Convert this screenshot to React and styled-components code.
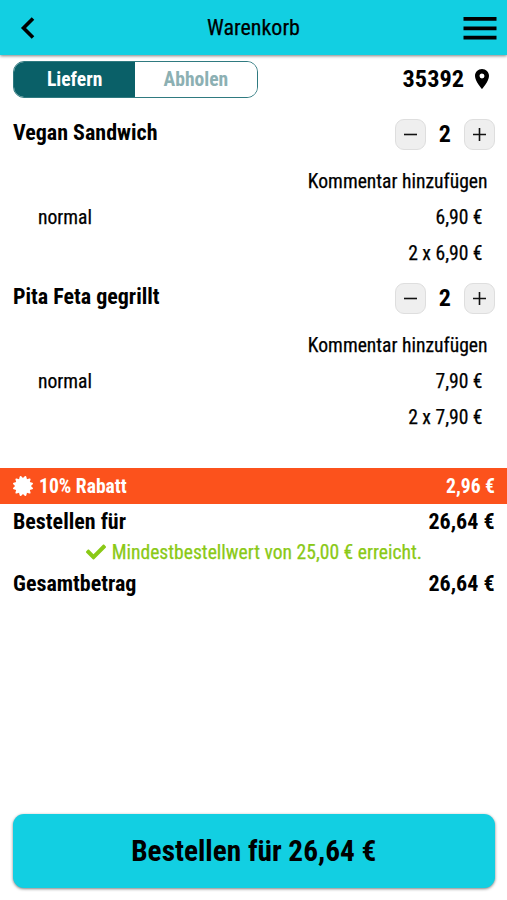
import styled, { createGlobalStyle } from 'styled-components';
import { useState } from 'react';
import { FaCheck, FaCertificate } from 'react-icons/fa';
import { MdLocationOn } from 'react-icons/md';

const GlobalStyle = createGlobalStyle`
  * {
    box-sizing: border-box;
  }
  body {
    margin: 0;
    background: #fff;
    color: #000;
    font-family: 'Roboto Condensed', Roboto, sans-serif;
    font-stretch: 75%;
    overflow: hidden;
  }
  button {
    font: inherit;
    font-stretch: inherit;
    color: inherit;
    padding: 0;
    cursor: pointer;
  }
`;

const Page = styled.div`
  display: flex;
  flex-direction: column;
  width: 507px;
  height: 900px;
`;

const Header = styled.header`
  display: grid;
  grid-template-columns: 80px 1fr 80px;
  align-items: center;
  height: 55px;
  flex: none;
  background: #12cfe2;
  box-shadow: 0 1px 3px rgba(0, 0, 0, 0.5);
`;

const HeaderButton = styled.button`
  display: flex;
  justify-content: ${props => props.$right ? 'flex-end' : 'flex-start'};
  padding: ${props => props.$right ? '1px 10px 0 0' : '1px 0 0 20px'};
  border: none;
  background: none;
`;

const Text = styled.span`
  display: inline-block;
  white-space: nowrap;
  font-size: ${props => props.$size || 19.6}px;
  font-weight: ${props => props.$bold ? 700 : 400};
  -webkit-text-stroke: ${props => props.$bold ? 0 : 0.25}px currentColor;
  line-height: 24px;
`;

const Title = styled.h1`
  margin: 0;
  padding-top: 1px;
  font-size: 0;
  text-align: center;
`;

const Options = styled.div`
  display: flex;
  justify-content: space-between;
  align-items: center;
  height: 37px;
  margin: 6px 13px 0;
  flex: none;
`;

const Toggle = styled.div`
  display: flex;
  width: 244.5px;
  height: 37px;
  border: 1px solid #2f7a80;
  border-radius: 11px;
  overflow: hidden;
`;

const ToggleItem = styled.button`
  flex: 1;
  border: none;
  background: ${props => props.$active ? '#0a6068' : '#fff'};
  color: ${props => props.$active ? '#fff' : '#8cb0b3'};
`;

const Place = styled.div`
  display: flex;
  align-items: center;
  gap: 6px;
  padding-bottom: 2px;
`;

const Items = styled.main`
  display: flex;
  flex-direction: column;
  height: 369.5px;
  padding: 21px 12.5px 0 13px;
  flex: none;
`;

const Item = styled.section`
  height: 163.5px;
`;

const Row = styled.div`
  display: flex;
  justify-content: space-between;
  align-items: center;
  height: ${props => props.$height || 36}px;
  padding: ${props => props.$inset || '0'};
`;

const RowRight = styled(Row)`
  justify-content: flex-end;
`;

const Name = styled(Text)`
  margin-top: -3px;
`;

const Count = styled(Text)`
  margin-top: -1px;
`;

const Stepper = styled.div`
  display: flex;
  align-items: center;
  gap: 12.7px;
`;

const StepButton = styled.button`
  display: flex;
  align-items: center;
  justify-content: center;
  width: 31px;
  height: 31px;
  border: 1px solid #dedede;
  border-radius: 9px;
  background: #efefef;
`;

const Discount = styled.div`
  display: flex;
  align-items: center;
  justify-content: space-between;
  height: 36.5px;
  padding: 2px 12px 0 13px;
  flex: none;
  background: #fc521c;
  color: #fff;

  svg {
    margin-top: -2px;
  }
`;

const IconLine = styled.div`
  display: flex;
  align-items: center;
  gap: ${props => props.$gap || 6}px;
`;

const Summary = styled.div`
  padding: 0.5px 12.5px 0 13px;
`;

const Reached = styled(IconLine)`
  height: 28px;
  justify-content: center;
  color: #8ac916;

  svg {
    margin-top: -1px;
  }
`;

const OrderButton = styled.button`
  height: 74px;
  margin: auto 12.5px 12px 13px;
  padding-top: 1px;
  flex: none;
  border: none;
  border-radius: 11px;
  background: #12cfe2;
  box-shadow: 0 1px 3px rgba(0, 0, 0, 0.5);
`;

const products = [
  { name: 'Vegan Sandwich', price: '6,90 €' },
  { name: 'Pita Feta gegrillt', price: '7,90 €' },
];

function Sign({ plus }) {
  return (
    <svg width="15" height="15" viewBox="0 0 15 15" stroke="#111" strokeWidth="1.6">
      <path d={plus ? 'M1 7.5H14M7.5 1V14' : 'M1 7.5H14'} />
    </svg>
  );
}

function CartItem({ name, price }) {
  const [count, setCount] = useState(2);

  return (
    <Item>
      <Row $height={31}>
        <Name $size={22} $bold>{name}</Name>
        <Stepper>
          <StepButton onClick={() => setCount(Math.max(0, count - 1))}><Sign /></StepButton>
          <Count $size={24} $bold>{count}</Count>
          <StepButton onClick={() => setCount(count + 1)}><Sign plus /></StepButton>
        </Stepper>
      </Row>
      <RowRight $height={49} $inset="21px 7px 6px 0"><Text>Kommentar hinzufügen</Text></RowRight>
      <Row $height={36} $inset="2px 12px 0 25px">
        <Text>normal</Text>
        <Text>{price}</Text>
      </Row>
      <RowRight $height={36} $inset="2px 12px 0 0"><Text>{count} x {price}</Text></RowRight>
    </Item>
  );
}

export default function App() {
  const [delivery, setDelivery] = useState(true);

  return (
    <Page>
      <GlobalStyle />
      <Header>
        <HeaderButton>
          <svg width="15" height="22" viewBox="0 0 15 22" fill="none" stroke="#000" strokeWidth="3.6">
            <path d="M13 1.5L3.5 11L13 20.5" />
          </svg>
        </HeaderButton>
        <Title><Text $size={22}>Warenkorb</Text></Title>
        <HeaderButton $right>
          <svg width="34" height="23" viewBox="0 0 34 23" fill="#000">
            <path d="M0.5 0H33.5V3.8H0.5ZM0.5 9.4H33.5V13.2H0.5ZM0.5 18.8H33.5V22.6H0.5Z" />
          </svg>
        </HeaderButton>
      </Header>

      <Options>
        <Toggle>
          <ToggleItem $active={delivery} onClick={() => setDelivery(true)}>
            <Text $bold>Liefern</Text>
          </ToggleItem>
          <ToggleItem $active={!delivery} onClick={() => setDelivery(false)}>
            <Text $bold>Abholen</Text>
          </ToggleItem>
        </Toggle>
        <Place>
          <Text $size={24.3} $bold>35392</Text>
          <MdLocationOn size={24} />
        </Place>
      </Options>

      <Items>
        {products.map(p => <CartItem key={p.name} {...p} />)}
      </Items>

      <Discount>
        <IconLine>
          <FaCertificate size={20} />
          <Text $bold>10% Rabatt</Text>
        </IconLine>
        <Text $bold>2,96 €</Text>
      </Discount>

      <Summary>
        <Row $height={34}>
          <Text $size={22} $bold>Bestellen für</Text>
          <Text $size={22} $bold>26,64 €</Text>
        </Row>
        <Reached>
          <FaCheck size={20} />
          <Text>Mindestbestellwert von 25,00 € erreicht.</Text>
        </Reached>
        <Row $height={34}>
          <Text $size={22} $bold>Gesamtbetrag</Text>
          <Text $size={22} $bold>26,64 €</Text>
        </Row>
      </Summary>

      <OrderButton>
        <Text $size={29.3} $bold>Bestellen für 26,64 €</Text>
      </OrderButton>
    </Page>
  );
}
